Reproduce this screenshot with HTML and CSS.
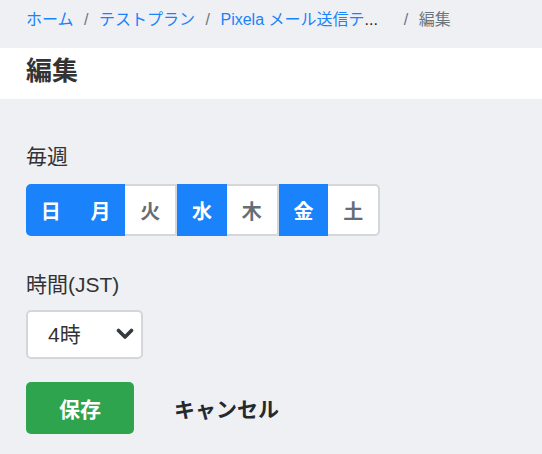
FILE: index.html
```html
<!DOCTYPE html>
<html lang="ja">
<head>
<meta charset="utf-8">
<title>編集</title>
<link rel="stylesheet" href="styles.css">
</head>
<body>
<nav class="breadcrumb">
  <a class="crumb" href="#">ホーム</a>
  <span class="sep">/</span>
  <a class="crumb" href="#">テストプラン</a>
  <span class="sep">/</span>
  <a class="crumb truncated" href="#">Pixela メール送信テ<span class="dots">...</span></a>
  <span class="sep wide">/</span>
  <span class="current">編集</span>
</nav>
<header class="page-header">
  <h1>編集</h1>
</header>
<main class="content">
  <div class="label">毎週</div>
  <div class="days">
    <span class="day on">日</span>
    <span class="day on">月</span>
    <span class="day off">火</span>
    <span class="day on">水</span>
    <span class="day off">木</span>
    <span class="day on">金</span>
    <span class="day off">土</span>
  </div>
  <div class="label second">時間(JST)</div>
  <div class="select-wrap">
    <select class="select">
      <option>4時</option>
    </select>
    <svg class="chevron" width="18" height="12" viewBox="0 0 18 12"><path d="M2.5 2.5 L9 9 L15.5 2.5" fill="none" stroke="#343a40" stroke-width="3.6" stroke-linecap="round" stroke-linejoin="round"/></svg>
  </div>
  <div class="actions">
    <button class="save">保存</button>
    <a class="cancel" href="#">キャンセル</a>
  </div>
</main>
</body>
</html>
```

FILE: styles.css
```css
html, body {
  margin: 0;
  padding: 0;
  background: #eff0f4;
  font-family: "Liberation Sans", "Noto Sans CJK JP", sans-serif;
  color: #333;
}

.breadcrumb {
  display: flex;
  align-items: center;
  height: 48px;
  box-sizing: border-box;
  padding: 0 26px 8px;
  font-size: 16px;
  line-height: 20px;
  white-space: nowrap;
}

.crumb {
  color: #1a82fb;
  text-decoration: none;
}

.dots {
  color: #222;
}

.sep {
  color: #6c757d;
  margin: 0 10.5px;
}

.sep.wide {
  margin-left: 26px;
}

.current {
  color: #6c757d;
}

.page-header {
  background: #fff;
  height: 51px;
  box-sizing: border-box;
  padding: 5px 26px 10px;
}

.page-header h1 {
  margin: 0;
  font-size: 26px;
  line-height: 36px;
  font-weight: bold;
  color: #333;
}

.content {
  padding: 46px 26px 0;
}

.label {
  font-size: 21px;
  line-height: 24px;
  color: #333;
}

.label.second {
  margin-top: 37px;
}

.days {
  display: flex;
  width: 354px;
  height: 52px;
  margin-top: 15px;
}

.day {
  flex: 1;
  display: flex;
  align-items: center;
  justify-content: center;
  box-sizing: border-box;
  font-size: 20px;
  font-weight: bold;
}

.day.on {
  background: #1a82fb;
  color: #fff;
}

.day.off {
  background: #fff;
  color: #666d74;
  border: 2px solid #d3d6db;
  border-left: none;
}

.day:first-child {
  border-radius: 5px 0 0 5px;
}

.day:last-child {
  border-radius: 0 5px 5px 0;
}

.select-wrap {
  position: relative;
  width: 117px;
  height: 49px;
  margin-top: 13px;
}

.select {
  appearance: none;
  -webkit-appearance: none;
  width: 100%;
  height: 100%;
  box-sizing: border-box;
  border: 2px solid #d3d6db;
  border-radius: 5px;
  background: #fff;
  padding: 0 0 0 20px;
  font-family: "Liberation Sans", "Noto Sans CJK JP", sans-serif;
  font-size: 21px;
  color: #333;
}

.chevron {
  position: absolute;
  right: 9px;
  top: 18px;
}

.actions {
  display: flex;
  align-items: center;
  gap: 40px;
  margin-top: 23px;
}

.save {
  width: 108px;
  height: 52px;
  border: none;
  border-radius: 5px;
  background: #2ea44f;
  color: #fff;
  font-family: "Liberation Sans", "Noto Sans CJK JP", sans-serif;
  font-size: 21px;
  font-weight: bold;
}

.cancel {
  font-size: 21px;
  font-weight: bold;
  color: #24292e;
  text-decoration: none;
}
```
